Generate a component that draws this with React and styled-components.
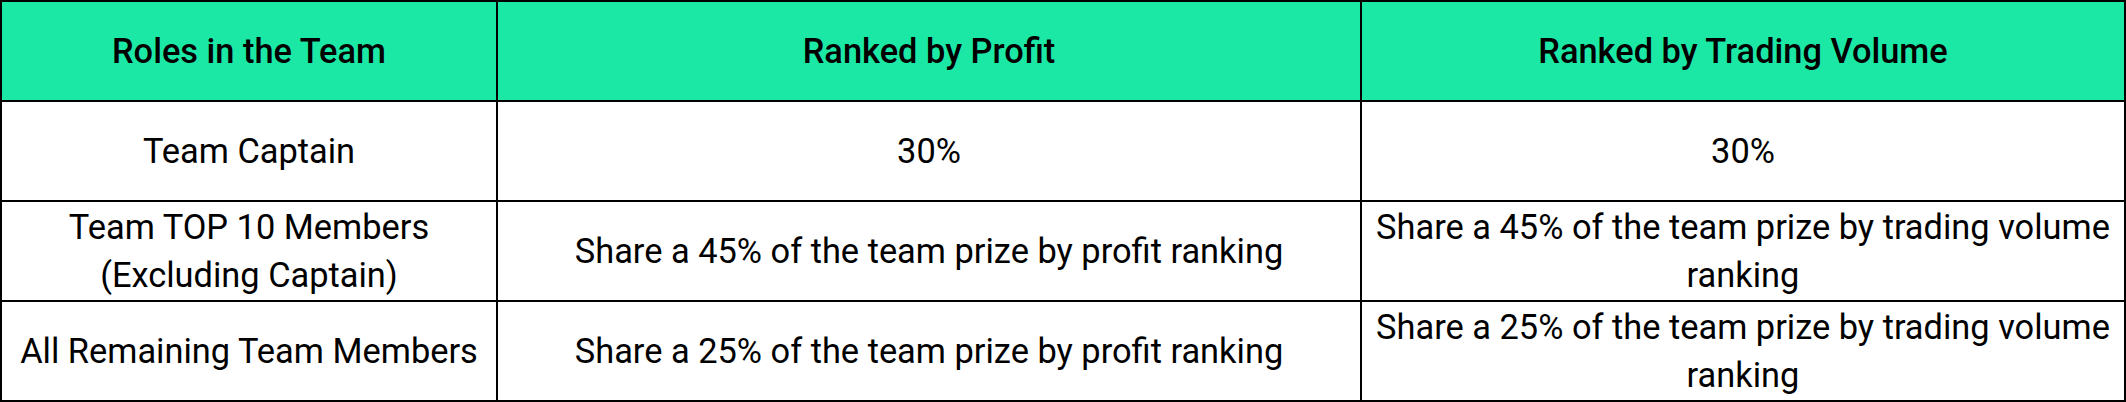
import React from "react";
import styled, { createGlobalStyle } from "styled-components";

const Global = createGlobalStyle`
  html, body { margin: 0; padding: 0; background: #ffffff; }
  body { font-family: Roboto, "Liberation Sans", Arial, sans-serif; }
`;

const Table = styled.div`
  display: grid;
  grid-template-columns: 494px 862px 762px;
  grid-template-rows: 98px 98px 98px 98px;
  gap: 2px;
  padding: 2px;
  width: 2126px;
  box-sizing: border-box;
  background: #000000;
`;

const Cell = styled.div`
  display: flex;
  align-items: center;
  justify-content: center;
  text-align: center;
  padding: 0 8px;
  background: ${(p) => (p.$head ? "#1ce8a6" : "#ffffff")};
  color: #000000;
  font-size: 34.4px;
  line-height: 48px;
  font-weight: ${(p) => (p.$head ? 500 : 400)};
`;

const rows = [
  ["Team Captain", "30%", "30%"],
  [
    "Team TOP 10 Members (Excluding Captain)",
    "Share a 45% of the team prize by profit ranking",
    "Share a 45% of the team prize by trading volume ranking",
  ],
  [
    "All Remaining Team Members",
    "Share a 25% of the team prize by profit ranking",
    "Share a 25% of the team prize by trading volume ranking",
  ],
];

export default function App() {
  return (
    <>
      <Global />
      <Table>
        <Cell $head>Roles in the Team</Cell>
        <Cell $head>Ranked by Profit</Cell>
        <Cell $head>Ranked by Trading Volume</Cell>
        {rows.map((r, i) =>
          r.map((c, j) => <Cell key={`${i}-${j}`}>{c}</Cell>)
        )}
      </Table>
    </>
  );
}
